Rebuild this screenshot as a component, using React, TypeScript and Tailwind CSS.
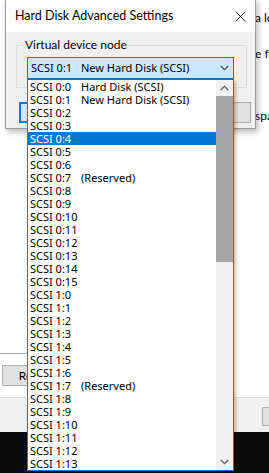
import React from 'react';

const uiFont = { fontFamily: 'Lato, "Noto Sans", Arial, sans-serif' };
const listFont = { fontFamily: '"Noto Sans", Arial, sans-serif' };

const rows: [string, string][] = [];
for (let bus = 0; bus < 2; bus++) {
  const max = bus === 0 ? 16 : 14;
  for (let id = 0; id < max; id++) {
    let note = '';
    if (bus === 0 && id === 0) note = 'Hard Disk (SCSI)';
    if (bus === 0 && id === 1) note = 'New Hard Disk (SCSI)';
    if (id === 7) note = '(Reserved)';
    rows.push([`SCSI ${bus}:${id}`, note]);
  }
}

function Chevron({ up, className }: { up?: boolean; className?: string }) {
  return (
    <svg width="9" height="6" viewBox="0 0 9 6" className={className}>
      <path
        d={up ? 'M0.8 5 L4.5 1.3 L8.2 5' : 'M0.8 1 L4.5 4.7 L8.2 1'}
        fill="none"
        stroke="currentColor"
        strokeWidth="1.3"
      />
    </svg>
  );
}

function DropList() {
  return (
    <div
      className="absolute left-[27px] top-[79px] z-20 flex h-[392px] w-[207px] border border-[#0078d7] bg-white shadow-[2px_2px_3px_rgba(0,0,0,0.25)]"
      style={listFont}
    >
      <div className="flex w-[188px] flex-col">
        {rows.map(([a, b], i) => (
          <div
            key={a}
            className={
              i === 4
                ? 'flex h-[13px] items-center whitespace-nowrap bg-[#0078d7] pl-[2px] text-[11px] leading-[13px] text-white'
                : 'flex h-[13px] items-center whitespace-nowrap pl-[2px] text-[11px] leading-[13px] text-black'
            }
          >
            <span className="w-[51px] shrink-0">{a}</span>
            <span>{b}</span>
          </div>
        ))}
      </div>
      <div className="flex w-[17px] flex-col bg-[#f0f0f0]">
        <div className="flex h-[16px] items-center justify-center text-[#606060]">
          <Chevron up />
        </div>
        <div className="h-[166px] bg-[#a6a6a6]" />
        <div className="flex-1" />
        <div className="flex h-[17px] items-center justify-center text-[#606060]">
          <Chevron />
        </div>
      </div>
    </div>
  );
}

function Dialog() {
  return (
    <div className="absolute left-[5px] top-[-1px] z-10 flex h-[130px] w-[251px] flex-col border border-[#9a9a9a] shadow-[2px_3px_6px_rgba(0,0,0,0.28)]">
      <div className="flex h-[32px] items-center justify-between bg-white pl-[9px] pr-[9px]">
        <span className="text-[12.5px] text-black">Hard Disk Advanced Settings</span>
        <svg width="11" height="11" viewBox="0 0 11 11">
          <path d="M0.5 0.5 L10.5 10.5 M10.5 0.5 L0.5 10.5" stroke="#222" strokeWidth="1" />
        </svg>
      </div>
      <div className="flex flex-1 flex-col bg-[#f0f0f0] pl-[10px] pt-[13px]">
        <div className="relative h-[43px] w-[231px] border border-[#dcdcdc] pl-[10px] pt-[11px]">
          <span className="absolute left-[7px] top-[-9px] bg-[#f0f0f0] px-[1px] text-[12px] leading-[16px] text-black">
            Virtual device node
          </span>
          <div
            className="flex h-[22px] w-[207px] items-center whitespace-nowrap border border-[#0078d7] bg-[#cce8ff] pl-[3px] pr-[4px] text-[11px] text-black"
            style={listFont}
          >
            <span className="w-[50px] shrink-0">SCSI 0:1</span>
            <span className="flex-1">New Hard Disk (SCSI)</span>
            <Chevron className="text-[#555]" />
          </div>
        </div>
        <div className="mt-[14px] flex w-[235px] justify-between pl-[3px]">
          <div className="h-[21px] w-[80px] border-2 border-[#0078d7] bg-[#e1e1e1]" />
          <div className="h-[21px] w-[80px] border border-[#adadad] bg-[#e1e1e1]" />
        </div>
      </div>
    </div>
  );
}

export default function App() {
  return (
    <div className="relative h-[473px] w-[269px] overflow-hidden bg-white" style={uiFont}>
      <div className="flex h-full flex-col">
        <div className="h-[397px] bg-white">
          <div className="whitespace-nowrap pl-[255px] pt-[10px] text-[12px] leading-[16px] text-black">
            <div>a lo</div>
            <div className="mt-[20px]">e fr</div>
            <div className="mt-[46px]">spa</div>
          </div>
          <div className="mt-[229px] h-px w-[60px] bg-[#a9a9a9]" />
          <div className="ml-[2px] mt-[11px] flex h-[21px] w-[76px] items-center justify-center border border-[#adadad] bg-[#e1e1e1] text-[12px] text-black">
            Remove
          </div>
        </div>
        <div className="h-[35px] border-t border-[#dfdfdf] bg-[#f0f0f0] pl-[262px] pt-[9px]">
          <div className="h-[19px] w-[60px] border border-[#adadad] bg-[#e1e1e1]" />
        </div>
        <div className="flex-1 bg-[#0a0a0a]" />
      </div>
      <Dialog />
      <DropList />
    </div>
  );
}
